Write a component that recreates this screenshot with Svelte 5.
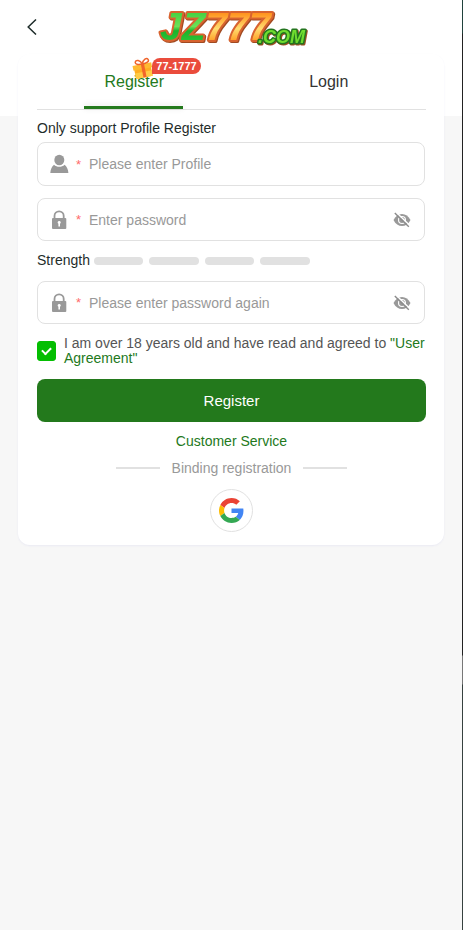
<script lang="ts">
	let activeTab = $state('register');
	let agreed = $state(true);
	let visible: Record<string, boolean> = $state({});

	const tabs = [
		{ id: 'register', name: 'Register', badge: '77-1777' },
		{ id: 'login', name: 'Login', badge: '' }
	];
</script>

{#snippet lockIcon()}
	<svg class="icon" viewBox="0 0 20 20" aria-hidden="true">
		<path d="M5.500 9V6a4.600 4.600 0 0 1 9.200 0v3" fill="none" stroke="#999" stroke-width="1.800" />
		<rect x="3" y="8" width="14.300" height="11" rx="1" fill="#999" />
		<path d="M10.200 11a1.500 1.500 0 0 1 .8 2.800V16.500H9.400v-2.700a1.500 1.500 0 0 1 .8-2.800z" fill="#fff" />
	</svg>
{/snippet}

{#snippet passwordField(id: string, placeholder: string)}
	<div class="field password">
		{@render lockIcon()}
		<span class="required">*</span>
		<input
			{id}
			type={visible[id] ? 'text' : 'password'}
			{placeholder}
			aria-label={placeholder}
		/>
		<button
			type="button"
			class="eye"
			aria-label="Show password"
			onclick={() => (visible[id] = !visible[id])}
		>
			<svg viewBox="0 0 18 16" width="18" height="16" aria-hidden="true">
				<path d="M.5 8C2.500 4 5.500 2 9 2S15.500 4 17.500 8C15.500 12 12.500 14 9 14S2.500 12 .5 8z" fill="#999" />
				<circle cx="9" cy="8" r="4" fill="#fff" />
				<circle cx="9" cy="8" r="2.900" fill="#999" />
				<path d="M3.200 .4 17.200 13.800" stroke="#fff" stroke-width="1.500" />
				<path d="M1.800 1 15.800 14.800" stroke="#8c8c8c" stroke-width="1.400" />
			</svg>
		</button>
	</div>
{/snippet}

<div class="page">
	<header>
		<button type="button" class="back" aria-label="Back">
			<svg viewBox="0 0 10 16" width="10" height="16" aria-hidden="true">
				<path d="M9 .5 1.200 8 9 15.500" fill="none" stroke="#1f2d2b" stroke-width="1.500" />
			</svg>
		</button>
		<svg class="logo" viewBox="0 0 150 46" width="150" height="46" role="img" aria-label="JZ777.com">
			<defs>
				<linearGradient id="green" x1="0" y1="0" x2="0" y2="1">
					<stop offset="0" stop-color="#2fc936" />
					<stop offset="0.500" stop-color="#6ce058" />
					<stop offset="0.600" stop-color="#1bb32b" />
					<stop offset="1" stop-color="#35ce3d" />
				</linearGradient>
				<linearGradient id="gold" x1="0" y1="0" x2="0" y2="1">
					<stop offset="0.200" stop-color="#ff941f" />
					<stop offset="0.550" stop-color="#ffdc70" />
					<stop offset="0.850" stop-color="#ff9d22" />
				</linearGradient>
			</defs>
			<text class="big" x="4" y="40" fill="url(#gold)"><tspan fill="url(#green)">JZ</tspan>777</text>
			<text class="small" x="102" y="43">.COM</text>
		</svg>
	</header>

	<main class="card">
		<div class="tabs" role="tablist">
			{#each tabs as tab (tab.id)}
				<button
					type="button"
					role="tab"
					class="tab"
					class:active={activeTab === tab.id}
					aria-selected={activeTab === tab.id}
					onclick={() => (activeTab = tab.id)}
				>
					{tab.name}
					{#if tab.badge}
						<span class="badge">
							<svg viewBox="0 0 22 22" width="22" height="22" aria-hidden="true">
								<g transform="rotate(-11 11 13)">
									<path d="M2.500 10h17v10.500h-17z" fill="#ffad22" />
									<path d="M2.500 15h17v5.500h-17z" fill="#ffcb45" />
									<path d="M1.500 7h19v5h-19z" fill="#ffba32" />
									<path d="M10 7h3.200v13.500H10z" fill="#f2652a" />
									<path d="M11.500 7C7 7 4 5.800 5 3.600S10 2.500 11.500 7c1.500-4.500 5.500-5.600 6.500-3.400S16 7 11.500 7z" fill="none" stroke="#ef642c" stroke-width="1.500" />
								</g>
							</svg>
							<span class="amount">{tab.badge}</span>
						</span>
					{/if}
				</button>
			{/each}
		</div>

		<form onsubmit={(e) => e.preventDefault()}>
			<label class="caption" for="profile">Only support Profile Register</label>
			<div class="field">
				<svg class="icon" viewBox="0 0 20 20" aria-hidden="true">
					<ellipse cx="10.300" cy="6" rx="5" ry="5.300" fill="#999" />
					<path d="M1.300 19c.2-3.500 1.500-6.500 3.700-8.300 1.500 1.500 3.300 2 5.300 2s3.800-.5 5.300-2c2.200 1.800 3.600 4.800 3.800 8.300z" fill="#999" />
				</svg>
				<span class="required">*</span>
				<input id="profile" type="text" placeholder="Please enter Profile" />
			</div>

			{@render passwordField('password', 'Enter password')}

			<div class="strength">
				<span>Strength</span>
				<div class="bars">
					{#each [1, 2, 3, 4] as level (level)}
						<i></i>
					{/each}
				</div>
			</div>

			{@render passwordField('confirm', 'Please enter password again')}

			<div class="agree">
				<input id="agree" type="checkbox" bind:checked={agreed} />
				<label for="agree">
					I am over 18 years old and have read and agreed to <a href="#agreement">"User Agreement"</a>
				</label>
			</div>

			<button type="submit" class="submit">Register</button>
		</form>

		<a class="service" href="#service">Customer Service</a>
		<div class="binding"><span>Binding registration</span></div>
		<button type="button" class="google" aria-label="Google">
			<svg viewBox="0 0 48 48" width="25" height="25" aria-hidden="true">
				<path fill="#EA4335" d="M24 9.500c3.540 0 6.710 1.220 9.210 3.600l6.850-6.850C35.900 2.380 30.470 0 24 0 14.620 0 6.510 5.380 2.560 13.220l7.980 6.190C12.430 13.720 17.740 9.500 24 9.500z" />
				<path fill="#4285F4" d="M46.980 24.550c0-1.570-.15-3.090-.38-4.550H24v9.020h12.940c-.58 2.960-2.260 5.480-4.780 7.180l7.730 6c4.510-4.180 7.090-10.360 7.090-17.650z" />
				<path fill="#FBBC05" d="M10.530 28.590c-.48-1.450-.76-2.990-.76-4.590s.27-3.140.76-4.590l-7.980-6.190C.92 16.460 0 20.120 0 24s.92 7.540 2.560 10.780l7.970-6.190z" />
				<path fill="#34A853" d="M24 48c6.480 0 11.930-2.130 15.890-5.810l-7.730-6c-2.150 1.450-4.920 2.300-8.160 2.300-6.260 0-11.570-4.220-13.470-9.910l-7.980 6.190C6.510 42.620 14.620 48 24 48z" />
			</svg>
		</button>
	</main>
</div>

<style>
	:global(body) {
		margin: 0;
		background: linear-gradient(#20423d 33px, #222 34px, #222 655px, #777 656px, #777 684px, #36413f 685px);
	}

	.page,
	.page button,
	.page input {
		font-family: 'Liberation Sans', Arial, sans-serif;
	}

	.page {
		box-sizing: border-box;
		min-height: 100vh;
		margin-right: 1px;
		padding-bottom: 24px;
		background: linear-gradient(#fff 116px, #f7f7f7 116px);
		color: #1f2d2b;
		font-size: 14px;
	}

	button {
		padding: 0;
		border: 0;
		background: none;
		cursor: pointer;
	}

	a {
		color: #23791c;
		text-decoration: none;
	}

	header {
		display: grid;
		grid-template-columns: 64px 1fr 64px;
		justify-items: center;
		align-items: center;
		height: 54px;
	}

	.back {
		display: flex;
	}

	.logo {
		align-self: start;
		overflow: visible;
		font-weight: bold;
		font-style: italic;
		paint-order: stroke;
		stroke-linejoin: round;
		filter: drop-shadow(1px 1px 0 #a04a22);
	}

	.big {
		font-size: 39px;
		stroke: #d8632f;
		stroke-width: 4px;
	}

	.small {
		font-size: 18px;
		fill: #6fdc2f;
		stroke: #23751f;
		stroke-width: 3px;
	}

	/* MAIN CARD */
	.card {
		display: flex;
		flex-direction: column;
		margin: 0 18px;
		padding: 0 18px 13px 19px;
		border-radius: 12px;
		background: #fff;
		box-shadow: 0 1px 2px rgba(90, 90, 200, 0.08);
	}

	.tabs {
		display: flex;
		border-bottom: 1px solid #e1e1e1;
	}

	.tab {
		position: relative;
		flex: 1;
		height: 55px;
		color: #333;
		font-size: 16px;
	}

	.tab.active {
		color: #23791c;
	}

	.tab.active::after {
		content: '';
		position: absolute;
		bottom: 0;
		left: 24%;
		right: 25%;
		height: 3px;
		background: #23791c;
		box-shadow: 0 -1px 6px rgba(0, 0, 0, 0.12);
	}

	.badge {
		position: absolute;
		top: 3px;
		left: 49%;
		display: flex;
	}

	.amount {
		height: 16px;
		margin: 1px 0 0 -2px;
		padding: 0 4px;
		border-radius: 8px 8px 8px 0;
		background: #ea4c3c;
		color: #fff;
		font-size: 11px;
		font-weight: bold;
		line-height: 16px;
	}

	form {
		display: flex;
		flex-direction: column;
	}

	.caption {
		margin: 10px 0 6px;
		line-height: 16px;
	}

	.field {
		display: flex;
		align-items: center;
		box-sizing: border-box;
		height: 44px;
		margin: 0 1px 12px 0;
		padding: 0 13px 0 11px;
		border: 1px solid #e1e1e1;
		border-radius: 8px;
	}

	.field.password {
		height: 43px;
	}

	.icon {
		width: 20px;
		height: 20px;
	}

	.required {
		width: 20px;
		padding-left: 7px;
		box-sizing: border-box;
		color: #ff6b6b;
		font-size: 13px;
	}

	.field input {
		flex: 1;
		min-width: 0;
		padding: 0;
		border: 0;
		outline: 0;
		background: none;
		font-size: 14px;
	}

	.field input::placeholder {
		color: #999;
		opacity: 1;
	}

	.eye {
		display: flex;
	}

	.strength {
		display: flex;
		align-items: center;
		gap: 4px;
		margin-bottom: 13px;
		line-height: 15px;
	}

	.bars {
		display: grid;
		grid-template-columns: repeat(4, 1fr);
		gap: 6px;
		width: 216px;
	}

	.bars i {
		height: 8px;
		border-radius: 4px;
		background: #e1e1e1;
	}

	.agree {
		display: flex;
		align-items: center;
		gap: 8px;
		margin-bottom: 13px;
		color: #555;
		line-height: 15px;
	}

	.agree input {
		flex: none;
		appearance: none;
		display: grid;
		place-items: center;
		width: 19px;
		height: 20px;
		margin: 0;
		border: 1px solid #ccc;
		border-radius: 3px;
	}

	.agree input:checked {
		border-color: #04be02;
		background: #04be02;
	}

	.agree input:checked::before {
		content: '';
		width: 7px;
		height: 4px;
		margin-bottom: 3px;
		border: solid #fff;
		border-width: 0 0 2px 2px;
		transform: rotate(-45deg);
	}

	.submit {
		height: 43px;
		border-radius: 8px;
		background: #23791c;
		color: #fff;
		font-size: 15px;
	}

	.service {
		align-self: center;
		margin: 11px 0;
		line-height: 16px;
	}

	.binding {
		display: flex;
		justify-content: center;
		align-items: center;
		gap: 12px;
		color: #999;
		line-height: 16px;
	}

	.binding::before,
	.binding::after {
		content: '';
		width: 44px;
		height: 2px;
		background: #e1e1e1;
	}

	.google {
		display: grid;
		place-items: center;
		align-self: center;
		box-sizing: border-box;
		width: 43px;
		height: 43px;
		margin-top: 13px;
		border: 1px solid #e1e1e1;
		border-radius: 50%;
	}
</style>
